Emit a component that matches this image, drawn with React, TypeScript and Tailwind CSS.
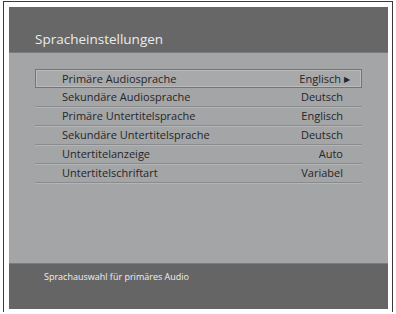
const rows = [
  { label: "Primäre Audiosprache", value: "Englisch", active: true },
  { label: "Sekundäre Audiosprache", value: "Deutsch" },
  { label: "Primäre Untertitelsprache", value: "Englisch" },
  { label: "Sekundäre Untertitelsprache", value: "Deutsch" },
  { label: "Untertitelanzeige", value: "Auto" },
  { label: "Untertitelschriftart", value: "Variabel" },
];

export default function App() {
  return (
    <div className="h-[314px] w-[396px] bg-white pl-[3px] pt-[1px] font-['Open_Sans',sans-serif]">
      <div className="h-[311px] w-[390px] border-l border-r border-t border-[#3a3a3a] pl-[5px] pr-[3px] pt-[5px]">
        <div className="flex h-[302px] w-[379px] flex-col bg-[#a4a5a7]">
          <div className="flex h-[45px] items-end bg-[#676767] pb-[3px] pl-[26px] text-[13.5px] text-[#ececec]">
            Spracheinstellungen
          </div>
          <div className="h-[211px] border-t border-[#7a7a7a] pl-[26px] pt-[16px]">
            <div className="w-[327px]">
              {rows.map((row) => (
                <Row key={row.label} {...row} />
              ))}
            </div>
          </div>
          <div className="h-[46px] border-t border-[#7c7c7c] bg-[#656565] pl-[35px] pt-[6px] text-[9px] text-[#f0f0f0]">
            Sprachauswahl für primäres Audio
          </div>
        </div>
      </div>
    </div>
  );
}

function Row({ label, value, active }: { label: string; value: string; active?: boolean }) {
  return (
    <div
      className={
        active
          ? "flex h-[19px] items-center justify-between border border-[#747474] bg-[#a8a9ab] pl-[26px] pr-[11px] pt-[1px] text-[11px] text-[#262626] shadow-[inset_1px_1px_0_#bcbcbc,inset_-1px_-1px_0_#bcbcbc]"
          : "flex h-[19px] items-center justify-between border-b border-[#8a8b8d] pl-[27px] pr-[19px] pt-[1px] text-[11px] text-[#262626] shadow-[0_1px_0_#b4b5b7]"
      }
    >
      <span>{label}</span>
      <span className="flex items-center gap-[3px]">
        {value}
        {active ? <span className="text-[8px] leading-none">▶</span> : null}
      </span>
    </div>
  );
}
